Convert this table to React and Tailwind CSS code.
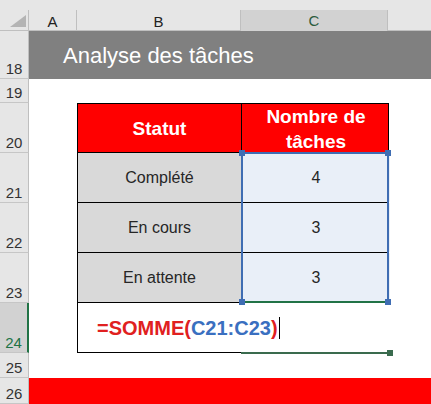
import React from 'react';

const rows = [
  { n: '18', h: 'h-[48px]' },
  { n: '19', h: 'h-[24px]' },
  { n: '20', h: 'h-[50px]' },
  { n: '21', h: 'h-[50px]' },
  { n: '22', h: 'h-[50px]' },
  { n: '23', h: 'h-[50px]' },
  { n: '24', h: 'h-[50px]', active: true },
  { n: '25', h: 'h-[25px]' },
  { n: '26', h: 'h-[26px]' },
];

const data = [
  { label: 'Complété', value: 4 },
  { label: 'En cours', value: 3 },
  { label: 'En attente', value: 3 },
];

function Handle({ className }) {
  return <div className={`absolute w-[6px] h-[6px] ${className}`} />;
}

export default function App() {
  return (
    <div className="w-[431px] h-[404px] overflow-hidden bg-[#e6e6e6] font-['Liberation_Sans',Arial,sans-serif] relative">
      {/* top strip */}
      <div className="h-[10px]" />

      {/* column headers */}
      <div className="grid grid-cols-[29px_48px_164px_147px_1fr] h-[21px] border-b border-[#bfbfbf] text-[15px] text-[#222]">
        <div className="border-r border-[#bfbfbf] relative">
          <svg width="29" height="21" className="absolute left-0 top-0">
            <polygon points="10,17 26,17 26,5" fill="#b4b4b4" />
          </svg>
        </div>
        <div className="border-r border-[#bfbfbf] flex items-center justify-center">A</div>
        <div className="border-r border-[#bfbfbf] flex items-center justify-center">B</div>
        <div className="bg-[#d2d2d2] border-r border-[#bfbfbf] border-b-2 border-b-[#217346] flex items-center justify-center text-[#2c5b3e]">C</div>
        <div />
      </div>

      <div className="flex">
        {/* row headers */}
        <div className="w-[29px] flex flex-col">
          {rows.map((r) => (
            <div
              key={r.n}
              className={`${r.h} flex items-end justify-center pb-[1px] text-[15px] leading-[17px] border-b border-[#c6c6c6] ${
                r.active
                  ? 'bg-[#d2d2d2] text-[#217346] border-r-2 border-r-[#217346]'
                  : 'text-[#333] border-r border-r-[#bfbfbf]'
              }`}
            >
              {r.n}
            </div>
          ))}
        </div>

        {/* sheet */}
        <div className="flex-1 bg-white flex flex-col">
          <div className="h-[48px] bg-[#808080] flex items-center pl-[34px] text-white text-[22px]">
            Analyse des tâches
          </div>
          <div className="h-[24px]" />

          <div className="pl-[48px] relative">
            <div className="w-[312px]">
              <div className="grid grid-cols-[164px_148px] h-[50px] bg-[#ff0000] border border-black text-white font-bold text-[19px]">
                <div className="border-r border-black flex items-center justify-center">Statut</div>
                <div className="flex flex-col items-center justify-center leading-[25px]">
                  <span>Nombre de</span>
                  <span>tâches</span>
                </div>
              </div>
              {data.map((d) => (
                <div key={d.label} className="grid grid-cols-[164px_148px] h-[50px] border-x border-b border-black text-[16px] text-[#262626]">
                  <div className="bg-[#d9d9d9] border-r border-black flex items-center justify-center">{d.label}</div>
                  <div className="bg-[#e9eff8] flex items-center justify-center">{d.value}</div>
                </div>
              ))}
              <div className="grid grid-cols-[164px_148px] h-[50px]">
                <div className="border-l border-b border-black flex items-center pl-[19px] col-span-2 relative">
                  <span className="font-bold text-[20px] text-[#e02020] flex items-center">
                    =SOMME(<span className="text-[#3a6fc0]">C21:C23</span>)
                    <span className="inline-block w-[1px] h-[22px] bg-black ml-[1px]" />
                  </span>
                </div>
              </div>
            </div>

            {/* selection C21:C23 */}
            <div className="absolute left-[212px] top-[49px] w-[148px] h-[151px] border-x-2 border-t-2 border-[#3f6db3] border-b-2 border-b-[#217346] pointer-events-none">
              <Handle className="bg-[#3f6db3] -left-[4px] -top-[4px]" />
              <Handle className="bg-[#3f6db3] -right-[4px] -top-[4px]" />
              <Handle className="bg-[#3f6db3] -left-[4px] -bottom-[4px]" />
              <Handle className="bg-[#3f6db3] -right-[4px] -bottom-[4px]" />
            </div>
            {/* active cell C24 bottom */}
            <div className="absolute left-[212px] top-[249px] w-[148px] h-[2px] bg-[#3a6b4e]">
              <Handle className="bg-[#3a6b4e] -right-[4px] -top-[2px]" />
            </div>
          </div>

          <div className="h-[25px]" />
          <div className="h-[26px] bg-[#ff0000]" />
        </div>
      </div>
    </div>
  );
}
